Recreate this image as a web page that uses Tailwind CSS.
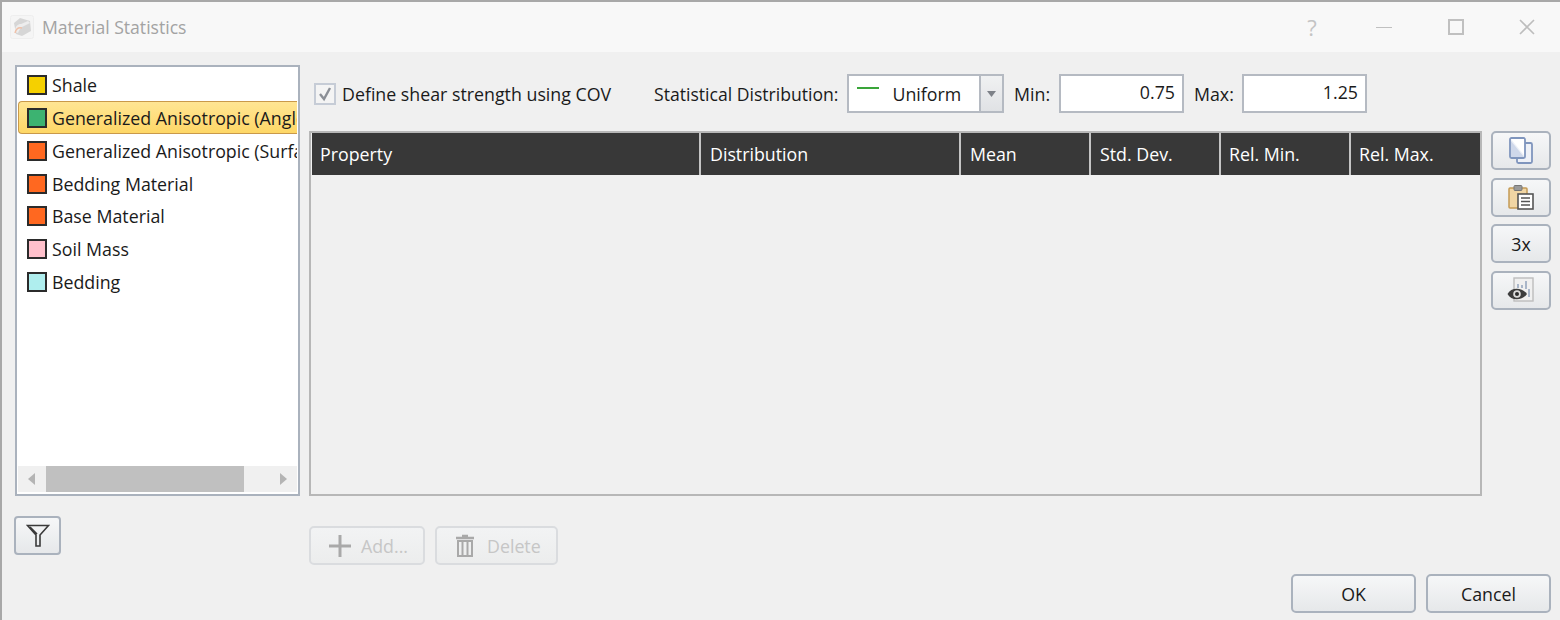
<!DOCTYPE html>
<html lang="en">
<head>
    <meta charset="UTF-8">
    <title>Material Statistics</title>
    <script src="https://cdn.jsdelivr.net/npm/@tailwindcss/browser@4"></script>
</head>
<body class="m-0 overflow-hidden">
    <div class="w-[1560px] h-[620px] flex flex-col bg-[#f0f0f0] border-t-2 border-l-2 border-[#a8a8a8] text-[17.8px] leading-[24px] text-[#1a1a1a] font-['Open_Sans',sans-serif] overflow-hidden">
        <!-- Title bar -->
        <div class="h-[50px] shrink-0 flex items-center bg-[#f8f8f8]">
            <svg class="ml-[8px] w-[24px] h-[24px]" viewBox="0 0 24 24">
                <rect x="0.5" y="0.5" width="23" height="23" rx="2" fill="#f5f5f5" stroke="#eeeeee"/>
                <path d="M4 8 L10 3 L20 6 L21 16 L12 21 L6 19 Z" fill="#d6d6d6"/>
                <path d="M5 17 C5 11 8 9 11 9 L18 6 L20 8 L12 12 C10 13 9 16 8 18 Z" fill="#ededed"/>
                <path d="M5 18 C6 14 8 12 12 13" fill="none" stroke="#efc0a8" stroke-width="1.5"/>
            </svg>
            <span class="ml-[8px] text-[17.6px] text-[#a3a3a3]">Material Statistics</span>
            <div class="ml-auto flex items-center">
                <span class="w-[20px] text-center text-[22px] text-[#c4c4c4] mr-[54px]">?</span>
                <div class="w-[16px] h-[1px] bg-[#c0c0c0] mr-[56px]"></div>
                <div class="w-[16px] h-[16px] border-2 border-[#c0c0c0] mr-[55px]"></div>
                <svg class="w-[16px] h-[16px] mr-[25px]" viewBox="0 0 16 16"><path d="M1 1 L15 15 M15 1 L1 15" stroke="#bdbdbd" stroke-width="1.6"/></svg>
            </div>
        </div>

        <!-- Dialog body -->
        <div class="flex flex-1 min-h-0">
            <!-- Left column -->
            <div class="w-[286px] ml-[12px] mt-[13px] shrink-0 flex flex-col">
                <div class="h-[431px] ml-[0.5px] bg-white border-2 border-[#aab2bd] flex flex-col">
                    <div class="flex-1 pt-[1.6px] overflow-hidden">
                        <div class="h-[32.85px] flex items-center pl-[10.5px] whitespace-nowrap"><span class="w-[20px] h-[20px] border-2 border-[#2b2b2b] bg-[#f5d000] mr-[5px] shrink-0"></span>Shale</div>
                        <div class="h-[32.85px] ml-[1.5px] mr-[1px] flex items-center pl-[8px] whitespace-nowrap overflow-hidden rounded-l-[4px] border border-r-0 border-[#c9994a] bg-gradient-to-b from-[#ffe593] to-[#fed766]"><span class="w-[20px] h-[20px] border-2 border-[#2b2b2b] bg-[#3cb371] mr-[5px] shrink-0"></span>Generalized Anisotropic (Angle)</div>
                        <div class="h-[32.85px] mr-[1px] flex items-center pl-[10.5px] whitespace-nowrap overflow-hidden"><span class="w-[20px] h-[20px] border-2 border-[#2b2b2b] bg-[#ff6820] mr-[5px] shrink-0"></span>Generalized Anisotropic (Surface)</div>
                        <div class="h-[32.85px] flex items-center pl-[10.5px] whitespace-nowrap"><span class="w-[20px] h-[20px] border-2 border-[#2b2b2b] bg-[#ff6820] mr-[5px] shrink-0"></span>Bedding Material</div>
                        <div class="h-[32.85px] flex items-center pl-[10.5px] whitespace-nowrap"><span class="w-[20px] h-[20px] border-2 border-[#2b2b2b] bg-[#ff6820] mr-[5px] shrink-0"></span>Base Material</div>
                        <div class="h-[32.85px] flex items-center pl-[10.5px] whitespace-nowrap"><span class="w-[20px] h-[20px] border-2 border-[#2b2b2b] bg-[#ffc0cb] mr-[5px] shrink-0"></span>Soil Mass</div>
                        <div class="h-[32.85px] flex items-center pl-[10.5px] whitespace-nowrap"><span class="w-[20px] h-[20px] border-2 border-[#2b2b2b] bg-[#afeeee] mr-[5px] shrink-0"></span>Bedding</div>
                    </div>
                    <!-- Horizontal scrollbar -->
                    <div class="h-[26px] mx-[1px] mb-[2px] flex items-center bg-[#f0f0f0]">
                        <div class="w-[28px] flex justify-center"><svg class="w-[7px] h-[12px]" viewBox="0 0 7 12"><path d="M7 0 V12 L0 6 Z" fill="#b4b4b4"/></svg></div>
                        <div class="w-[198px] h-[26px] bg-[#c0c0c0]"></div>
                        <div class="flex-1 flex justify-end pr-[10px]"><svg class="w-[7px] h-[12px]" viewBox="0 0 7 12"><path d="M0 0 V12 L7 6 Z" fill="#b4b4b4"/></svg></div>
                    </div>
                </div>
                <button class="mt-[20px] w-[47px] h-[39px] flex items-center justify-center rounded-[4px] border-2 border-[#aab2bd] bg-gradient-to-b from-[#f6f7f8] to-[#e6e8ea]">
                    <svg class="w-[24px] h-[24px]" viewBox="0 0 24 24"><path d="M1.5 1.5 H22.5 L14 11 V22 H10 V11 Z M4 3 L11 10" fill="none" stroke="#3a3a3a" stroke-width="1.6"/></svg>
                </button>
            </div>

            <!-- Right column -->
            <div class="ml-[9px] flex-1 min-w-0 flex flex-col">
                <!-- Controls -->
                <div class="h-[39px] mt-[22px] ml-[5px] flex items-center whitespace-nowrap">
                    <span class="w-[22px] h-[22px] flex items-center justify-center border-2 border-[#c6ccd6] bg-[#f4f4f4]">
                        <svg class="w-[16px] h-[16px]" viewBox="0 0 16 16"><path d="M3 8 L7 13 L13 2" fill="none" stroke="#8b8f96" stroke-width="2.4"/></svg>
                    </span>
                    <span class="ml-[6px] w-[312px] shrink-0">Define shear strength using COV</span>
                    <span class="w-[193px] shrink-0 text-[17.6px]">Statistical Distribution:</span>
                    <div class="w-[157px] h-[39px] flex border-2 border-[#b5bac2] bg-white">
                        <div class="flex-1 relative pl-[43.5px] flex items-center">
                            <span class="absolute left-[8px] top-[11px] w-[22px] h-[1.5px] bg-[#3aa53a]"></span>
                            Uniform
                        </div>
                        <div class="w-[23px] border-l-2 border-[#b5bac2] bg-gradient-to-b from-[#f0f1f2] to-[#e0e2e5] flex items-center justify-center">
                            <svg class="w-[9px] h-[6px]" viewBox="0 0 9 6"><path d="M0 0 H9 L4.5 6 Z" fill="#7d8188"/></svg>
                        </div>
                    </div>
                    <span class="ml-[10px] w-[45px] shrink-0">Min:</span>
                    <div class="w-[125px] h-[39px] border-2 border-[#b5bac2] bg-white text-right pr-[7px] leading-[33px]">0.75</div>
                    <span class="ml-[10px] w-[48px] shrink-0">Max:</span>
                    <div class="w-[125px] h-[39px] border-2 border-[#b5bac2] bg-white text-right pr-[7px] leading-[33px]">1.25</div>
                </div>

                <!-- Table and side buttons -->
                <div class="mt-[18px] flex">
                    <div class="w-[1173px] h-[365px] border-2 border-[#b7b7b7]">
                        <div class="h-[42px] ml-[1px] grid grid-cols-[389px_260px_130px_130px_130px_130px] bg-[#383838] text-white">
                            <div class="flex items-center pl-[8px] border-r-2 border-[#c4c4c4]">Property</div>
                            <div class="flex items-center pl-[9px] border-r-2 border-[#c4c4c4]">Distribution</div>
                            <div class="flex items-center pl-[9px] border-r-2 border-[#c4c4c4]">Mean</div>
                            <div class="flex items-center pl-[9px] border-r-2 border-[#c4c4c4]">Std. Dev.</div>
                            <div class="flex items-center pl-[8px] border-r-2 border-[#c4c4c4]">Rel. Min.</div>
                            <div class="flex items-center pl-[8px]">Rel. Max.</div>
                        </div>
                    </div>
                    <div class="ml-[9px] flex flex-col gap-[7.5px]">
                        <button class="w-[60px] h-[39px] flex items-center justify-center rounded-[5px] border-2 border-[#aab2bd] bg-gradient-to-b from-[#f6f7f8] to-[#e6e8ea]">
                            <svg class="w-[26px] h-[27px]" viewBox="0 0 26 27">
                                <rect x="9" y="6" width="15" height="20" rx="1.5" fill="#eef1f7" stroke="#7f95bd" stroke-width="1.8"/>
                                <rect x="2" y="1" width="15" height="20" rx="1.5" fill="#eef1f7" stroke="#7f95bd" stroke-width="1.8"/>
                                <path d="M3 2 L16 18 V2 Z" fill="#fff"/>
                                <path d="M3 4 L16 20 H3 Z" fill="#cfd8ea"/>
                            </svg>
                        </button>
                        <button class="w-[60px] h-[39px] flex items-center justify-center rounded-[5px] border-2 border-[#aab2bd] bg-gradient-to-b from-[#f6f7f8] to-[#e6e8ea]">
                            <svg class="w-[28px] h-[26px]" viewBox="0 0 28 26">
                                <rect x="2" y="4" width="18" height="20" rx="1" fill="#f1d6a4" stroke="#c49a55" stroke-width="1.5"/>
                                <rect x="7" y="1.5" width="8" height="5" rx="1" fill="#9a9a9a" stroke="#777"/>
                                <rect x="11" y="10" width="15" height="15" fill="#fff" stroke="#555" stroke-width="1.6"/>
                                <path d="M14 14 H23 M14 17.5 H23 M14 21 H23" stroke="#555" stroke-width="1.4"/>
                            </svg>
                        </button>
                        <button class="w-[60px] h-[39px] flex items-center justify-center rounded-[5px] border-2 border-[#aab2bd] bg-gradient-to-b from-[#f6f7f8] to-[#e6e8ea]">3x</button>
                        <button class="w-[60px] h-[39px] flex items-center justify-center rounded-[5px] border-2 border-[#aab2bd] bg-gradient-to-b from-[#f6f7f8] to-[#e6e8ea]">
                            <svg class="w-[28px] h-[26px]" viewBox="0 0 28 26">
                                <rect x="7" y="1" width="19" height="23" fill="#f0f0f0" stroke="#bdbdbd" stroke-width="1.4"/>
                                <path d="M11 11 V7 M15 11 V8 M19 12 V4 M22 20 V12" stroke="#a9b6c9" stroke-width="2"/>
                                <path d="M0.5 17 C4 10 15 10 20 17 C15 24 4 24 0.5 17 Z" fill="#3d3d3d"/>
                                <circle cx="10" cy="17" r="3.8" fill="#dcdcdc"/>
                                <circle cx="10" cy="17" r="2" fill="#2c2c2c"/>
                            </svg>
                        </button>
                    </div>
                </div>

                <!-- Add / Delete -->
                <div class="mt-[30px] flex gap-[10px] text-[#c6c6c6]">
                    <button class="w-[116px] h-[39px] flex items-center rounded-[5px] border-2 border-[#dadcdf] bg-gradient-to-b from-[#f2f3f4] to-[#eceded]">
                        <svg class="ml-[17px] w-[24px] h-[24px]" viewBox="0 0 24 24"><path d="M12 1 V23 M1 12 H23" stroke="#a9a9a9" stroke-width="3"/></svg>
                        <span class="ml-[9px]">Add...</span>
                    </button>
                    <button class="w-[123px] h-[39px] flex items-center rounded-[5px] border-2 border-[#dadcdf] bg-gradient-to-b from-[#f2f3f4] to-[#eceded]">
                        <svg class="ml-[18px] w-[20px] h-[24px]" viewBox="0 0 20 24">
                            <path d="M7 2 H13 M1 4 H19" stroke="#a9a9a9" stroke-width="2.4"/>
                            <path d="M3 7 H17 V22 H3 Z" fill="none" stroke="#a9a9a9" stroke-width="2"/>
                            <path d="M7.5 7 V22 M12.5 7 V22" stroke="#a9a9a9" stroke-width="2"/>
                        </svg>
                        <span class="ml-[12px]">Delete</span>
                    </button>
                </div>

                <!-- OK / Cancel -->
                <div class="mt-[9px] mr-[9px] flex justify-end gap-[10px]">
                    <button class="w-[125px] h-[39px] rounded-[5px] border-2 border-[#aab2bd] bg-gradient-to-b from-[#f6f7f8] to-[#e6e8ea]">OK</button>
                    <button class="w-[125px] h-[39px] rounded-[5px] border-2 border-[#aab2bd] bg-gradient-to-b from-[#f6f7f8] to-[#e6e8ea]">Cancel</button>
                </div>
            </div>
        </div>
    </div>
</body>
</html>
